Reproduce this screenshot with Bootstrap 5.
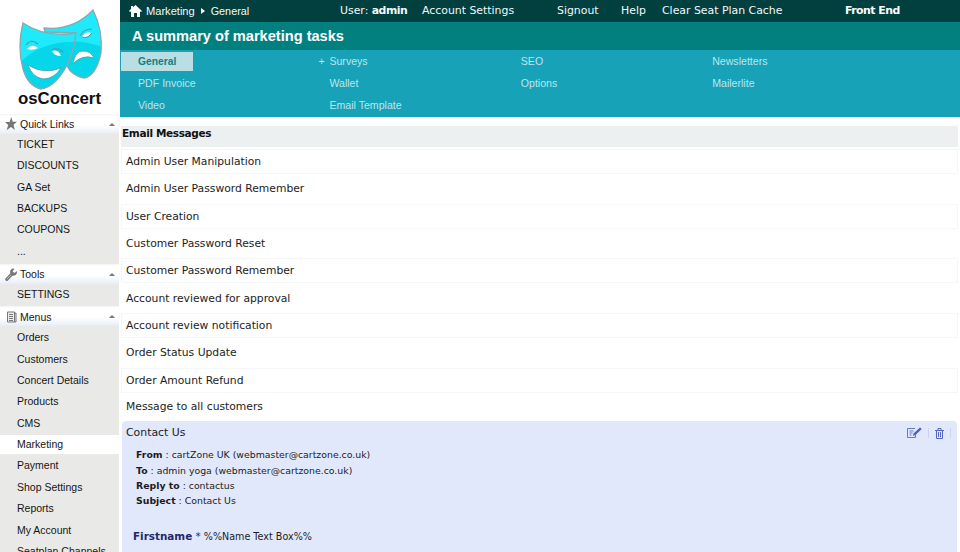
<!DOCTYPE html>
<html lang="en">
<head>
<meta charset="utf-8">
<meta name="viewport" content="width=device-width, initial-scale=1">
<title>osConcert - Marketing</title>
<link rel="stylesheet" href="https://cdn.jsdelivr.net/npm/bootstrap@5.3.0/dist/css/bootstrap.min.css">
<style>
body{font-family:"DejaVu Sans",Verdana,sans-serif;font-size:10.9px;line-height:14px;color:#1c1c1c;background:#fff}
a{color:inherit;text-decoration:none}
.shell{height:552px}
.side{width:119px;margin-right:1px;font:10.5px/21.35px "Liberation Sans",Arial,sans-serif;color:#151515;background:#e9eae8}
.brand{height:114px;background:#fff}
.brand-name{font-size:16.8px;line-height:18px;color:#111;margin:-1px 0 0 18px}
.side-head{height:20px;line-height:20px;padding:0 4px 0 5px;background:linear-gradient(#f4f4f4 0,#fff 2px,#fff 11px,#eaf0fa 19px,#e9eae8 20px)}
.side-head svg{flex:none;margin-right:3px}
.side-head.tools-head{margin-top:2px;height:20px}
.side-head.menus-head{margin-top:1px;height:21px}
.caret-up{border:3px solid transparent;border-top:0;border-bottom-color:#777}
.side-link{height:21.35px;padding-left:17px}
.side-link.active{background:linear-gradient(#e9eae8 1px,#fff 1px,#fff 20.5px,#e9eae8 20.5px)}
.topbar{height:22px;background:#024040;color:#f2f8f8;padding-left:9px}
.topbar b,.topbar .front{letter-spacing:-.5px}
.crumb{width:211px;font:11.1px/22px "Liberation Sans",Arial,sans-serif}
.crumb span:last-child{font-size:10.8px}
.w-user{width:82px}.w-account{width:135px}.w-signout{width:64px}.w-help{width:41px}.w-cache{width:183px}
.caret-right{border:3px solid transparent;border-right:0;border-left:4px solid #fff;margin:0 6px}
.titlebar{height:28px;background:#028080;color:#fff;font:bold 14.6px/28px "Liberation Sans",Arial,sans-serif;padding-left:12px}
.submenu{height:67px;background:#17a2b8;color:#b9e6ee;font:10.6px/19px "Liberation Sans",Arial,sans-serif;padding:2px 0 0 1px}
.submenu .entry{width:191.4px;height:22px;padding-left:17px}
.submenu .entry.current{padding-left:0}
.current span{display:inline-block;width:72px;height:19px;padding-left:17px;background:#b9dee3;color:#137f83;font-weight:bold;font-size:10.3px}
.submenu .entry.plus{padding-left:6px}
.plus i{font-style:normal;display:inline-block;width:11px}
.section-title{margin:9px 2px 2px 1px;height:21px;background:#ecf0f1;font-weight:bold;font-size:10.5px;letter-spacing:-.35px;color:#111;padding-left:1px}
.msg{height:27.35px;margin:0 2px 0 1px;font-size:10.75px;line-height:24px}
.msg-box{height:25px;padding-left:4px;border:1px solid #f4f6f8}
.msg:nth-child(even) .msg-box{border-color:transparent}
.msg:last-child{line-height:22px}
.panel{margin:-1px 3px 0 2px;height:135px;background:#e1e8fc;border-radius:4px 4px 0 0;padding:5px 6px 0 4px}
.details{font-size:9.35px;line-height:15.35px;padding:7px 0 0 10px}
.fname{font-size:10.4px;color:#22286a}
.form-line{font-size:9.6px;padding:20px 0 0 7px}
.divider{width:1px;height:10px;background:#ccd4f0}
.tool-gap{margin-left:6px}
</style>
<script src="https://cdn.jsdelivr.net/npm/bootstrap@5.3.0/dist/js/bootstrap.bundle.min.js"></script>
</head>
<body>
<div class="shell d-flex overflow-hidden">
<aside class="side flex-shrink-0 overflow-hidden text-nowrap">
<div class="brand">
<svg class="d-block" width="119" height="91" viewBox="0 0 119 91">
<defs>
<clipPath id="happy"><path d="M23 23Q45 38 76 33Q74 49 68 63Q56 87 41 89Q28 86 23 69Q17 47 23 23Z"/></clipPath>
<clipPath id="sad"><path d="M44 28Q73 31 93 10Q103 30 101 53Q96 76 84 78Q72 76 67 66L76 33L45 32Z"/></clipPath>
</defs>
<g clip-path="url(#sad)"><path fill="#1feafb" d="M40 8h65v75H40z"/><path fill="#06d6ea" d="M40 46Q75 36 105 48v40H40z"/></g>
<path d="M76 33L45 32L44 28Q73 31 93 10Q103 30 101 53Q96 76 84 78Q72 76 67 66" fill="none" stroke="#8aa9ae" stroke-width="1.3"/>
<path d="M73 64Q75 51 83 51Q91 51 94 58Q82 54 73 64Z" fill="#fff" stroke="#559ca4" stroke-width=".8"/>
<path d="M82 37Q85 31 92 33Q88 38 82 37Z" fill="#fff"/><path d="M80 36Q83 29 92 29M82 37Q88 39 92 33" fill="none" stroke="#4e98a2" stroke-width="1"/>
<g clip-path="url(#happy)"><path fill="#1feafb" d="M18 20h60v70H18z"/><path fill="#06d6ea" d="M18 65Q40 40 80 42v50H18z"/></g>
<path d="M23 23Q45 38 76 33Q74 49 68 63Q56 87 41 89Q28 86 23 69Q17 47 23 23Z" fill="none" stroke="#8aa9ae" stroke-width="1.4"/>
<path d="M28 65Q44 75 61 68Q54 79 43 79Q32 77 28 65Z" fill="#fff" stroke="#559ca4" stroke-width=".8"/>
<path d="M27 49Q32 43 38 48Q33 51 27 49ZM52 51Q58 49 61 56Q54 56 52 51Z" fill="#fff"/>
<path d="M26 45Q31 38 38 44M51 50Q58 47 63 52" fill="none" stroke="#4e98a2" stroke-width="1.1"/>
</svg>
<div class="brand-name fw-bold">osConcert</div>
</div>
<div class="side-head d-flex align-items-center"><svg width="12" height="14" viewBox="0 0 12 14"><path d="M6.300 0 7.700 4.800H12L8.600 7.800 9.800 13 6 10 1.600 13.200 3.200 8 0 5h4.600z" fill="#777"/></svg><span class="me-auto">Quick Links</span><span class="caret-up"></span></div>
<a class="side-link d-block" href="#">TICKET</a>
<a class="side-link d-block" href="#">DISCOUNTS</a>
<a class="side-link d-block" href="#">GA Set</a>
<a class="side-link d-block" href="#">BACKUPS</a>
<a class="side-link d-block" href="#">COUPONS</a>
<a class="side-link d-block" href="#">...</a>
<div class="side-head tools-head d-flex align-items-center"><svg width="12" height="13" viewBox="0 0 12 13"><path d="M1.800 11.300 7 6" stroke="#777" stroke-width="3.200" stroke-linecap="round"/><path d="M1.800 11.300 6.500 6.500" stroke="#bbb" stroke-width="1"/><path d="M9.500.8A3.300 3.300 0 0 0 5.300 5q.5 2.500 3 2.700A3.400 3.400 0 0 0 11.700 3L9.500 5 7.600 3.400z" fill="#777"/></svg><span class="me-auto">Tools</span><span class="caret-up"></span></div>
<a class="side-link d-block" href="#">SETTINGS</a>
<div class="side-head menus-head d-flex align-items-center"><svg width="12" height="12" viewBox="0 0 12 12"><path d="M2.500 1h7v10h-7zM9.500 2h1.500v9h-1.500" fill="#eee" stroke="#777"/><path d="M4 3.500h4M4 5.500h4M4 7.500h4M4 9.500h4" stroke="#777"/></svg><span class="me-auto">Menus</span><span class="caret-up"></span></div>
<a class="side-link d-block" href="#">Orders</a>
<a class="side-link d-block" href="#">Customers</a>
<a class="side-link d-block" href="#">Concert Details</a>
<a class="side-link d-block" href="#">Products</a>
<a class="side-link d-block" href="#">CMS</a>
<a class="side-link active d-block" href="#">Marketing</a>
<a class="side-link d-block" href="#">Payment</a>
<a class="side-link d-block" href="#">Shop Settings</a>
<a class="side-link d-block" href="#">Reports</a>
<a class="side-link d-block" href="#">My Account</a>
<a class="side-link d-block" href="#">Seatplan Channels</a>
</aside>
<main class="flex-grow-1 overflow-hidden text-nowrap">
<nav class="topbar d-flex align-items-center">
<div class="crumb d-flex align-items-center"><svg width="13" height="12" viewBox="0 0 13 12"><path d="M6.500 0 13 6l-1 1-1-.8V12H8V8H5v4H2V6.200L1 7 0 6l2-2V1h2v1.300z" fill="#fff"/></svg><span class="ms-1">Marketing</span><span class="caret-right"></span><span>General</span></div>
<a href="#" class="w-user">User: <b>admin</b></a>
<a href="#" class="w-account">Account Settings</a>
<a href="#" class="w-signout">Signout</a>
<a href="#" class="w-help">Help</a>
<a href="#" class="w-cache">Clear Seat Plan Cache</a>
<a href="#" class="front fw-bold text-white">Front End</a>
</nav>
<div class="titlebar">A summary of marketing tasks</div>
<nav class="submenu d-flex flex-wrap align-content-start">
<a href="#" class="entry current"><span>General</span></a><a href="#" class="entry plus"><i>+</i>Surveys</a><a href="#" class="entry">SEO</a><a href="#" class="entry">Newsletters</a>
<a href="#" class="entry">PDF Invoice</a><a href="#" class="entry">Wallet</a><a href="#" class="entry">Options</a><a href="#" class="entry">Mailerlite</a>
<a href="#" class="entry">Video</a><a href="#" class="entry">Email Template</a>
</nav>
<div class="section-title">Email Messages</div>
<div>
<div class="msg"><div class="msg-box">Admin User Manipulation</div></div>
<div class="msg"><div class="msg-box">Admin User Password Remember</div></div>
<div class="msg"><div class="msg-box">User Creation</div></div>
<div class="msg"><div class="msg-box">Customer Password Reset</div></div>
<div class="msg"><div class="msg-box">Customer Password Remember</div></div>
<div class="msg"><div class="msg-box">Account reviewed for approval</div></div>
<div class="msg"><div class="msg-box">Account review notification</div></div>
<div class="msg"><div class="msg-box">Order Status Update</div></div>
<div class="msg"><div class="msg-box">Order Amount Refund</div></div>
<div class="msg"><div class="msg-box">Message to all customers</div></div>
</div>
<section class="panel">
<div class="d-flex justify-content-between"><span>Contact Us</span>
<div class="d-flex align-items-center">
<svg width="15" height="12" viewBox="0 0 15 12"><path d="M8 1.500H.5v9h8V8M2.500 4h4M2.500 6h3M2.500 8h2" fill="none" stroke="#6678c6"/><path d="m6 9 .8-2.700L13 .5l1.700 1.600L8.500 8z" fill="#4b5fbd"/></svg>
<span class="divider tool-gap"></span>
<svg class="tool-gap" width="9" height="11" viewBox="0 0 9 11"><path d="M0 2.500h9M3 2V.5h3V2M1.500 3v7.500h6V3M3.500 4v5M5.500 4v5" fill="none" stroke="#5368bd"/></svg>
<span class="divider tool-gap"></span>
</div></div>
<div class="details">
<div><b>From</b> : cartZone UK (webmaster@cartzone.co.uk)</div>
<div><b>To</b> : admin yoga (webmaster@cartzone.co.uk)</div>
<div><b>Reply to</b> : contactus</div>
<div><b>Subject</b> : Contact Us</div>
</div>
<div class="form-line"><span class="fname"><b>Firstname</b> *</span> %%Name Text Box%%</div>
</section>
</main>
</div>
</body>
</html>
